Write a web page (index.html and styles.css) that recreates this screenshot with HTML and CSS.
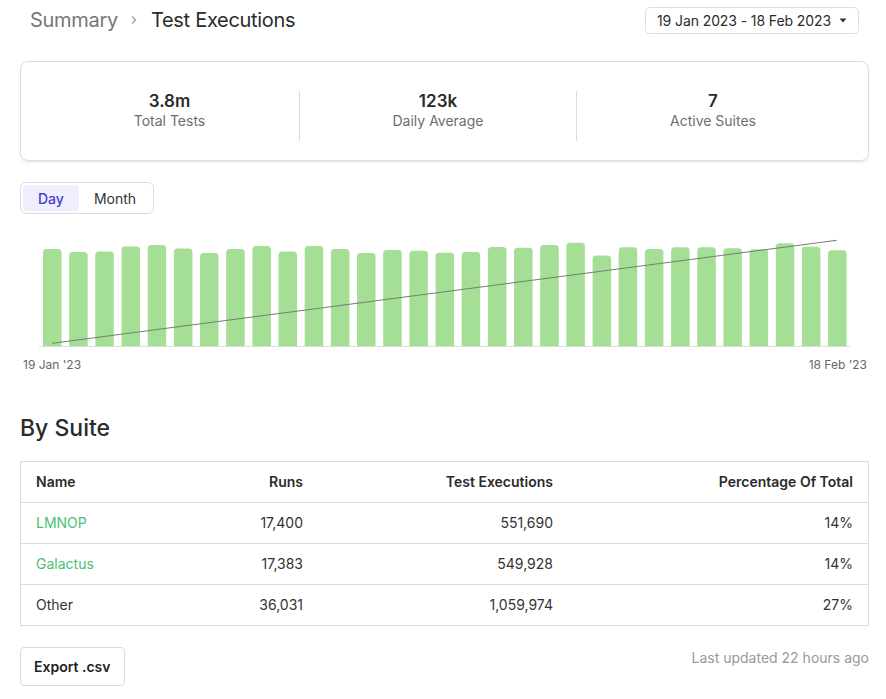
FILE: index.html
```html
<!DOCTYPE html>
<html lang="en">
<head>
<meta charset="utf-8">
<title>Test Executions</title>
<link rel="stylesheet" href="styles.css">
</head>
<body>
<div class="page">
  <header class="header">
    <nav class="crumbs">
      <span class="crumb-parent">Summary</span>
      <svg class="chev" width="8" height="10" viewBox="0 0 8 10"><polyline points="2,1.5 5.5,5 2,8.5" fill="none" stroke="#9a9a9a" stroke-width="1.2"/></svg>
      <span class="crumb-current">Test Executions</span>
    </nav>
    <button class="date-btn">19 Jan 2023 - 18 Feb 2023 <svg class="caret" width="8" height="5" viewBox="0 0 8 5"><polygon points="0.5,0.5 7.5,0.5 4,4.5" fill="#333"/></svg></button>
  </header>

  <section class="stats">
    <div class="stat"><div class="stat-value">3.8m</div><div class="stat-label">Total Tests</div></div>
    <div class="stat stat-div"><div class="stat-value">123k</div><div class="stat-label">Daily Average</div></div>
    <div class="stat stat-div"><div class="stat-value">7</div><div class="stat-label">Active Suites</div></div>
  </section>

  <div class="toggle">
    <button class="tog tog-active">Day</button>
    <button class="tog">Month</button>
  </div>

  <div class="chart">
    <svg width="850" height="128" viewBox="0 0 850 128">
      <defs><clipPath id="base"><rect x="0" y="0" width="850" height="120"/></clipPath></defs>
      <g clip-path="url(#base)" fill="#a4df95">
        <rect x="23.0" y="23" width="18.5" height="101" rx="3.5"/>
        <rect x="49.2" y="26" width="18.5" height="98" rx="3.5"/>
        <rect x="75.3" y="25.5" width="18.5" height="98.5" rx="3.5"/>
        <rect x="101.5" y="20.5" width="18.5" height="103.5" rx="3.5"/>
        <rect x="127.7" y="19" width="18.5" height="105" rx="3.5"/>
        <rect x="153.9" y="22.5" width="18.5" height="101.5" rx="3.5"/>
        <rect x="180.0" y="27" width="18.5" height="97" rx="3.5"/>
        <rect x="206.2" y="23" width="18.5" height="101" rx="3.5"/>
        <rect x="232.4" y="20" width="18.5" height="104" rx="3.5"/>
        <rect x="258.5" y="25.5" width="18.5" height="98.5" rx="3.5"/>
        <rect x="284.7" y="20" width="18.5" height="104" rx="3.5"/>
        <rect x="310.9" y="23" width="18.5" height="101" rx="3.5"/>
        <rect x="337.0" y="27" width="18.5" height="97" rx="3.5"/>
        <rect x="363.2" y="24" width="18.5" height="100" rx="3.5"/>
        <rect x="389.4" y="24.7" width="18.5" height="99.3" rx="3.5"/>
        <rect x="415.6" y="26.7" width="18.5" height="97.3" rx="3.5"/>
        <rect x="441.7" y="26" width="18.5" height="98" rx="3.5"/>
        <rect x="467.9" y="21" width="18.5" height="103" rx="3.5"/>
        <rect x="494.1" y="21.7" width="18.5" height="102.3" rx="3.5"/>
        <rect x="520.2" y="19" width="18.5" height="105" rx="3.5"/>
        <rect x="546.4" y="16.7" width="18.5" height="107.3" rx="3.5"/>
        <rect x="572.6" y="29.5" width="18.5" height="94.5" rx="3.5"/>
        <rect x="598.7" y="21.3" width="18.5" height="102.7" rx="3.5"/>
        <rect x="624.9" y="23" width="18.5" height="101" rx="3.5"/>
        <rect x="651.1" y="21.3" width="18.5" height="102.7" rx="3.5"/>
        <rect x="677.3" y="21.3" width="18.5" height="102.7" rx="3.5"/>
        <rect x="703.4" y="22.3" width="18.5" height="101.7" rx="3.5"/>
        <rect x="729.6" y="23.3" width="18.5" height="100.7" rx="3.5"/>
        <rect x="755.8" y="17.3" width="18.5" height="106.7" rx="3.5"/>
        <rect x="781.9" y="20.7" width="18.5" height="103.3" rx="3.5"/>
        <rect x="808.1" y="24.3" width="18.5" height="99.7" rx="3.5"/>
      </g>
      <line x1="19" y1="120.5" x2="830" y2="120.5" stroke="#dcdcdc" stroke-width="1"/>
      <line x1="32" y1="117.3" x2="816.7" y2="14.3" stroke="#7a7a7a" stroke-width="1"/>
    </svg>
    <div class="axis"><span>19 Jan '23</span><span>18 Feb '23</span></div>
  </div>

  <h2 class="section-title">By Suite</h2>

  <div class="table">
    <div class="row row-head">
      <div class="cell">Name</div>
      <div class="cell num">Runs</div>
      <div class="cell num">Test Executions</div>
      <div class="cell num">Percentage Of Total</div>
    </div>
    <div class="row">
      <div class="cell"><a class="link" href="#">LMNOP</a></div>
      <div class="cell num">17,400</div>
      <div class="cell num">551,690</div>
      <div class="cell num">14%</div>
    </div>
    <div class="row">
      <div class="cell"><a class="link" href="#">Galactus</a></div>
      <div class="cell num">17,383</div>
      <div class="cell num">549,928</div>
      <div class="cell num">14%</div>
    </div>
    <div class="row">
      <div class="cell">Other</div>
      <div class="cell num">36,031</div>
      <div class="cell num">1,059,974</div>
      <div class="cell num">27%</div>
    </div>
  </div>

  <footer class="footer">
    <button class="export-btn">Export .csv</button>
    <span class="updated">Last updated 22 hours ago</span>
  </footer>
</div>
</body>
</html>
```

FILE: styles.css
```css
* { box-sizing: border-box; }
html, body { margin: 0; padding: 0; background: #fff; }
body {
  font-family: Inter, "Noto Sans", "Liberation Sans", sans-serif;
  color: #333;
  font-size: 14px;
  line-height: 20px;
}
button { font-family: inherit; cursor: pointer; }

.page { padding: 0 17px 0 20px; }

.header {
  height: 40px;
  display: flex;
  align-items: center;
  justify-content: space-between;
}
.crumbs {
  display: flex;
  align-items: center;
  padding-left: 10px;
  font-size: 20px;
  line-height: 24px;
  letter-spacing: -0.3px;
}
.crumb-parent { color: #777; }
.chev { margin: 0 13px 0 12px; }
.crumb-current { color: #2b2b2b; }

.date-btn {
  margin-right: 10px;
  height: 27px;
  padding: 0 11px 0 11px;
  border: 1px solid #dedede;
  border-radius: 5px;
  background: #fff;
  color: #2b2b2b;
  font-size: 14px;
  letter-spacing: -0.1px;
  display: flex;
  align-items: center;
  gap: 8px;
}
.caret { display: block; }

.stats {
  margin-top: 21px;
  border: 1px solid #dcdcdc;
  border-radius: 8px;
  box-shadow: 0 2px 2px rgba(0,0,0,0.07);
  padding: 29px 19px 19px 19px;
  display: grid;
  grid-template-columns: 259px 277px 1fr;
}
.stat { height: 50px; text-align: center; }
.stat-div { border-left: 1px solid #dcdcdc; }
.stat-value { font-size: 17px; font-weight: 600; color: #2b2b2b; line-height: 20px; }
.stat-label { font-size: 14px; color: #6e6e6e; line-height: 20px; }

.toggle {
  margin-top: 21px;
  display: inline-flex;
  padding: 2px;
  border: 1px solid #dcdcdc;
  border-radius: 6px;
}
.tog {
  height: 26px;
  padding: 0 15px;
  border: none;
  background: transparent;
  border-radius: 4px;
  font-size: 14px;
  color: #333;
}
.tog-active { background: #efeefc; color: #4a3bd0; font-weight: 500; }

.chart { margin-top: 12px; }
.chart svg { display: block; }
.axis {
  display: flex;
  justify-content: space-between;
  padding: 0 2px 0 3px;
  font-size: 12px;
  line-height: 16px;
  color: #666;
  margin-top: 3px;
}

.section-title {
  margin: 41px 0 0 0;
  font-size: 23px;
  line-height: 28px;
  font-weight: 500;
  color: #2b2b2b;
}

.table {
  margin-top: 19px;
  border: 1px solid #dcdcdc;
}
.row {
  display: grid;
  grid-template-columns: 148px 149px 250px 1fr;
  height: 41px;
  align-items: center;
  border-top: 1px solid #dcdcdc;
}
.row:first-child { border-top: none; height: 40px; }
.cell { padding: 0 15px; }
.cell.num { text-align: right; }
.row-head .cell { font-weight: 600; color: #2b2b2b; }
.link { color: #4cbf72; text-decoration: none; }

.footer {
  margin-top: 21px;
  display: flex;
  justify-content: space-between;
  align-items: flex-start;
}
.export-btn {
  height: 39px;
  padding: 0 13px;
  border: 1px solid #dcdcdc;
  border-radius: 4px;
  background: #fff;
  color: #222;
  font-size: 14px;
  font-weight: 600;
}
.updated { color: #999; font-size: 14px; margin-top: 1px; }
```
